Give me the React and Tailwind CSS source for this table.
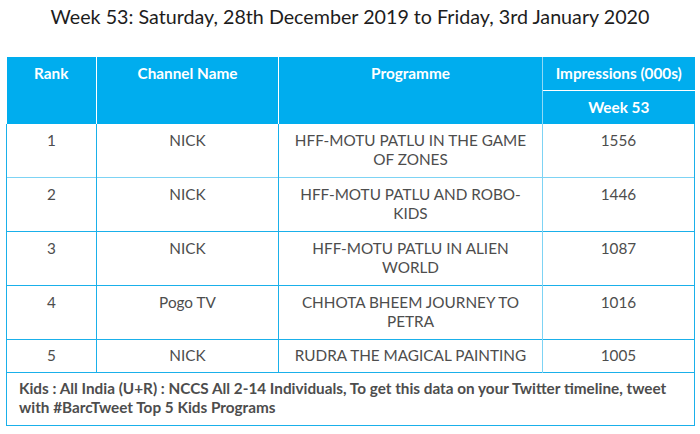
const rows = [
  { rank: 1, channel: 'NICK', programme: 'HFF-MOTU PATLU IN THE GAME OF ZONES', imp: 1556 },
  { rank: 2, channel: 'NICK', programme: 'HFF-MOTU PATLU AND ROBO-KIDS', imp: 1446 },
  { rank: 3, channel: 'NICK', programme: 'HFF-MOTU PATLU IN ALIEN WORLD', imp: 1087 },
  { rank: 4, channel: 'Pogo TV', programme: 'CHHOTA BHEEM JOURNEY TO PETRA', imp: 1016 },
  { rank: 5, channel: 'NICK', programme: 'RUDRA THE MAGICAL PAINTING', imp: 1005 },
];

export default function App() {
  return (
    <div className="w-[700px] h-[434px] bg-white pt-[5px] font-['Lato','Liberation_Sans',sans-serif]">
      <h2 className="text-center text-[19.7px] leading-[24px] text-[#1d1d1d]">
        Week 53: Saturday, 28th December 2019 to Friday, 3rd January 2020
      </h2>

      <table className="mt-[28px] ml-[6px] w-[688px] table-fixed border-collapse text-[15.3px] leading-[19px]">
        <colgroup>
          <col className="w-[90px]" />
          <col className="w-[182px]" />
          <col className="w-[264px]" />
          <col className="w-[152px]" />
        </colgroup>
        <thead className="bg-[#00adee] font-bold text-white">
          <tr className="h-[33px]">
            <th rowSpan={2} className="border-r border-white px-2 pt-[7px] align-top font-bold">Rank</th>
            <th rowSpan={2} className="border-r border-white px-2 pt-[7px] align-top font-bold">Channel Name</th>
            <th rowSpan={2} className="border-r border-[#8fd9f6] px-2 pt-[7px] align-top font-bold">Programme</th>
            <th className="border-b border-white px-1 pt-[7px] align-top font-bold">Impressions (000s)</th>
          </tr>
          <tr className="h-[34px]">
            <th className="px-2 align-middle font-bold">Week 53</th>
          </tr>
        </thead>
        <tbody className="text-[#4d4d4d]">
          {rows.map((r, i) => {
            const pad = i === 4 ? 'pt-[6px] pb-[7px]' : 'pt-[7px] pb-[8px]';
            return (
              <tr key={r.rank} className={i === 0 ? 'border-b border-[#7dd3f4]' : 'border-b border-[#1ab0ea]'}>
                <td className={`border-x border-[#1ab0ea] px-2 text-center align-top ${pad}`}>{r.rank}</td>
                <td className={`border-r border-[#1ab0ea] px-2 text-center align-top ${pad}`}>{r.channel}</td>
                <td className={`border-r border-[#7dd3f4] px-[14px] text-center align-top ${pad}`}>{r.programme}</td>
                <td className={`border-r border-[#1ab0ea] px-2 text-center align-top ${pad}`}>{r.imp}</td>
              </tr>
            );
          })}
          <tr className="border border-[#1ab0ea]">
            <td colSpan={4} className="px-[12px] pt-[6px] pb-[8px] text-left text-[15.3px] font-bold text-[#4d4d4d]">
              Kids : All India (U+R) : NCCS All 2-14 Individuals, To get this data on your Twitter timeline, tweet with #BarcTweet Top 5 Kids Programs
            </td>
          </tr>
        </tbody>
      </table>
    </div>
  );
}
